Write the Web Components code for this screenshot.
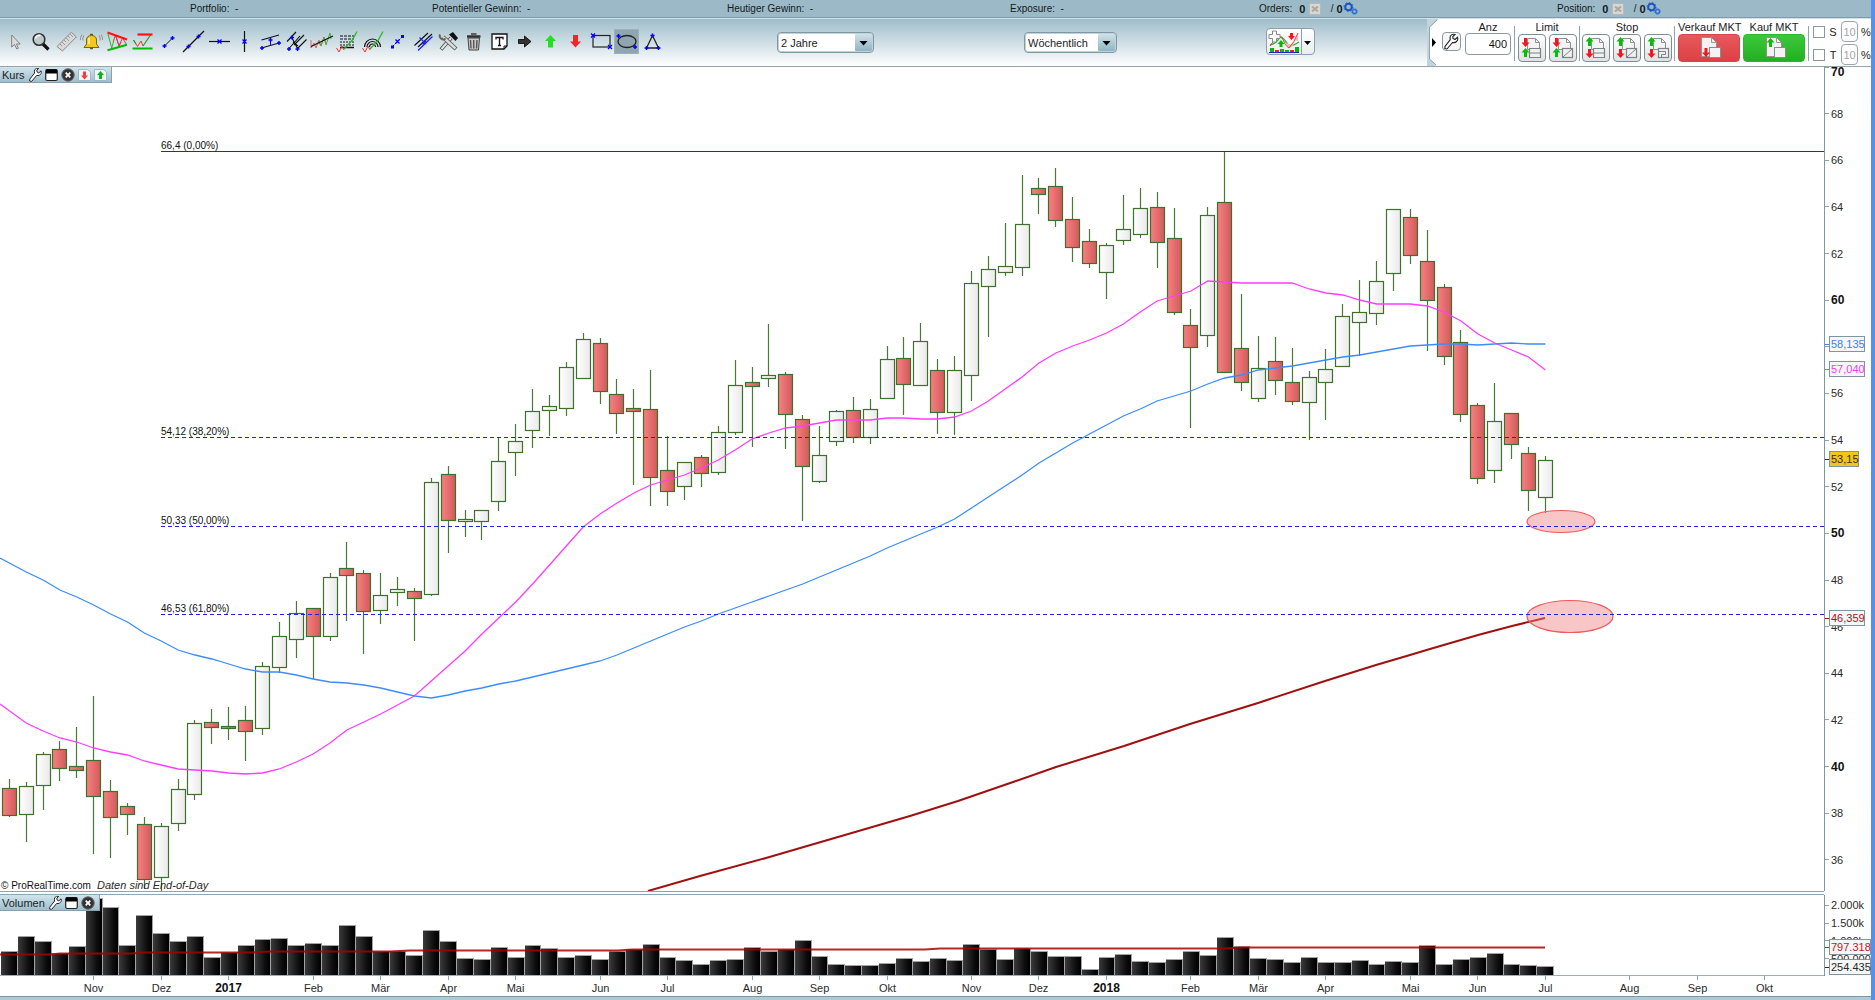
<!DOCTYPE html>
<html lang="de">
<head>
<meta charset="utf-8">
<title>ProRealTime</title>
<style>
html,body{margin:0;height:100%}
body{font:11px "Liberation Sans",Arial,sans-serif;color:#1c1c1c;background:#fff}
</style>
</head>
<body>
<trading-app></trading-app>
<script>
const plus = (x, y) => `<path d="M${x - 2} ${y}h4M${x} ${y - 2}v4" stroke="#00f" stroke-width="1.5"/>`;
const cross = (x, y) => `<path d="M${x - 2} ${y - 2}l4 4m0 -4l-4 4" stroke="#00f" stroke-width="1.3"/>`;
const zig = '<path d="M2.5 19l2.500 4 3-6" stroke="#e33"/><path d="M8 17l2 4" stroke="#e33"/><path d="M10 20L18 11.500L23 2.500" stroke="#2db52d" stroke-width="1.300"/>';
const ICONS = {
  cursor: '<path d="M8.700 6v12l2.800-2.500 2.300 4.500 1.600-.8-2-4.200h3.800z" fill="#dcdcdc" stroke="#777" stroke-width=".9"/>',
  zoom: '<path d="M14.500 14.500l6 6" stroke="#111" stroke-width="3.200"/><circle cx="11" cy="10.500" r="5.800" fill="#bfc9ce" stroke="#333" stroke-width="1.600"/><path d="M7.500 9.500a4 4 0 0 1 5-3" stroke="#fff" stroke-width="1.600"/>',
  ruler: '<path d="M3 17.500L17.300 3.200l5 4.700L8.500 22z" fill="#d9d9d9" stroke="#8a8a8a"/><path d="M6 15l2 2m0-4l3 3m-1-5l2 2m0-4l3 3m-1-5l2 2m0-4l3 3" stroke="#8a8a8a" stroke-width=".8"/>',
  bell: '<path d="M5 18.500h15l-2.500-3.500v-4c0-3-2-4.500-5-4.500s-5 1.500-5 4.500v4z" fill="#f2c81c" stroke="#6e5a10" stroke-width=".9"/><path d="M10 9v6" stroke="#fff3a0" stroke-width="1.500"/><path d="M11 5.500h3M11 19.500h3" stroke="#6e5a10" stroke-width="1.600"/><path d="M5 6.500q-2 2.500-1 5M3 5.500q-2 3-1.500 5.500M20 6.500q2 2.500 1 5M22 5.500q2 3 1.500 5.500" stroke="#8b8b8b" stroke-width=".9"/>',
  wedge: '<path d="M3 5l3.700 14 2-7" stroke="#2db52d"/><path d="M8.500 12l2-6L14 17l2-4" stroke="#e33"/><path d="M10.500 6L14 17l3.500-8 4 6.500" stroke="#c44"/><path d="M2.500 3.500L22 10.500" stroke="#f11" stroke-width="2.200"/><path d="M2.500 21.200L22 15.800" stroke="#0b0" stroke-width="2.200"/>',
  range: '<path d="M3.500 11l4 6.500L11 12l2 5" stroke="#e33"/><path d="M3.500 11l2.500 4M13 17l7.500-11" stroke="#2a9a2a" stroke-width="1.200"/><path d="M7.500 5.500h15" stroke="#f11" stroke-width="2.200"/><path d="M2.500 19.500h20" stroke="#0b0" stroke-width="2"/>',
  segment: '<path d="M8.500 17l8-8" stroke="#111"/>' + plus(8.5, 17) + plus(16.5, 9),
  line: '<path d="M2 23L23 2" stroke="#111" stroke-width="1.200"/>' + plus(7.5, 17.5) + plus(17.5, 7.5),
  hline: '<path d="M2 12.500h21" stroke="#111" stroke-width="1.200"/>' + cross(12.5, 12.5),
  vline: '<path d="M12.500 2v21" stroke="#111" stroke-width="1.200"/>' + cross(12.5, 12.5),
  channel: '<path d="M3.500 11L21 6M3.500 19L21 14" stroke="#111" stroke-width="1.200"/><path d="M12.500 10v6" stroke="#00f"/>' + plus(12.5, 11) + plus(4, 19) + plus(21, 14),
  pitchfork: '<path d="M6 19.500L17 7M9 9l5.500 10.500M14.500 19.500l9-9M10 13l5 4M4 12.500L13 3M11 16L21 6" stroke="#111" stroke-width="1.100"/>' + plus(9, 8.5) + plus(6, 20) + plus(14.5, 20),
  regression: '<path d="M2 11v8l3-5 2 5 3-8 2 6 3-9 2 7" stroke="#d66"/><path d="M9 12l3 5 3-9 2 8 4-12 1 6" stroke="#4aa84a"/><path d="M2 17.500L24 7" stroke="#111" stroke-width="1.200"/>',
  fibo: '<path d="M6 7h14M6 10h14" stroke="#111" stroke-dasharray="3 1"/><path d="M6 13h14M6 16h14" stroke="#111" stroke-dasharray="2 1"/><path d="M6 18.500h14" stroke="#111" stroke-width="1.500"/>' + zig,
  arcs: '<path d="M4.500 18a8 8 0 0 1 16 0M7 18a5.500 5.500 0 0 1 11 0M9.500 18a3 3 0 0 1 6 0" stroke="#111" stroke-width="1.200"/>' + zig,
  link: '<path d="M7.500 17.500l10-10" stroke="#111" stroke-dasharray="2 1"/><path d="M6 16.500h3v3h-3zM16 6h3v3h-3z" fill="#00f"/>' + cross(12.5, 12.5),
  parallel: '<path d="M3.500 16.500L17 4M7 18L21 5" stroke="#111" stroke-width="1.200"/><path d="M7 21.500L21.500 7.500M8.500 8.500l6 6m0-4v4h-4" stroke="#22f" stroke-width="1.300"/>',
  tools: '<path d="M5 20.500L15 9" stroke="#555" stroke-width="3.800"/><path d="M5.500 20L15 9" stroke="#e3e3e3" stroke-width="2"/><path d="M7 8l13 12" stroke="#555" stroke-width="4.200"/><path d="M7 8l12.500 11.500" stroke="#ddd" stroke-width="2.400"/><path d="M4 5.500a3.500 3.500 0 0 0 5.500 4" stroke="#666" stroke-width="2"/><path d="M13 5.500l4-2.500 5 6-2.500 3z" fill="#111"/>',
  trash: '<path d="M7 9h11.500l-1 12h-9.500z" fill="#c9c9c9" stroke="#444"/><path d="M9.500 11l.5 8.500M12.700 11v8.500M16 11l-.5 8.500" stroke="#555" stroke-width="1.400"/><path d="M6 7.500h13.500" stroke="#333" stroke-width="2.500"/><path d="M10 5h5.500" stroke="#444" stroke-width="1.600"/>',
  text: '<path d="M5 5h15v12l-3 3H5z" fill="#fff" stroke="#111" stroke-width="1.300"/><path d="M20 17h-3v3" stroke="#111"/><path d="M9 10.500v-2h7v2M12.500 8.500v8M11 16.500h3" stroke="#111" stroke-width="1.300"/>',
  right: '<path d="M6.500 10.500h6v-3.500l6.500 5.500-6.500 5.500v-3.500h-6z" fill="#333" stroke="#000" stroke-width=".8"/>',
  up: '<path d="M12.500 6l5.500 6h-3v6.500h-5V12H7z" fill="#26dd26"/>',
  down: '<path d="M12.500 18.500l5.500-6h-3V6h-5v6.500H7z" fill="#f8222a"/>',
  rect: '<rect x="4" y="6.500" width="17" height="11.500" stroke="#222" stroke-width="1.200"/>' + cross(4, 6.5) + cross(21, 18),
  ellipse: '<ellipse cx="13" cy="12.500" rx="9" ry="6" stroke="#222" stroke-width="1.300"/>' + plus(4.5, 7) + plus(21, 18),
  triangle: '<path d="M12.500 6.500l6 12.500h-12z" stroke="#222" stroke-width="1.300"/>' + plus(12.5, 6.5) + plus(6.5, 19) + plus(18.5, 19)
};
const WRENCH = '<path d="M2 13.500L1.800 15.500 4 16l5.500-6.500q3.500.8 5-2.200.5-1.500 0-3L12 6.500 10 5.500 9.800 3.500 12 1.500q-3-.8-4.500 1.500-.8 1.500-.2 3.700z" fill="#fff" stroke="#222" stroke-width="1.100"/>';
const svg = (w, h, body) => `<svg width="${w}" height="${h}" viewBox="0 0 ${w} ${h}" fill="none" aria-hidden="true">${body}</svg>`;
const GEARS = svg(15, 13, '<circle cx="5.500" cy="5" r="3.300" stroke="#1d55c4" stroke-width="2"/><circle cx="5.500" cy="5" r="4.500" stroke="#1d55c4" stroke-dasharray="1.500 2"/><circle cx="11.500" cy="9.500" r="2" stroke="#2f6fd8" stroke-width="1.400"/><circle cx="11.500" cy="9.500" r="2.800" stroke="#2f6fd8" stroke-dasharray="1 1.200"/>');
const CANCEL = svg(12, 12, '<rect x=".5" y=".5" width="11" height="11" fill="#d9d7cf" stroke="#b5b9b8"/><path d="M3 3.500l6 5m0-5l-6 5" stroke="#a9a9a4" stroke-width="2.200"/>');

class Base extends HTMLElement {
  constructor() { super(); this.attachShadow({ mode: 'open' }); }
  connectedCallback() { this.shadowRoot.innerHTML = `<style>${this.css()}</style>${this.html()}`; this.ready && this.ready(); }
}
const define = (name, css, html) => customElements.define(name, class extends Base {
  css() { return css; }
  html() { return typeof html === 'function' ? html(this) : html; }
});

define('tool-button', `
  :host{display:block}
  button{display:block;width:25px;height:25px;padding:0;border:0;background:none}
  :host([active]) button{background:#8fa5b0;box-shadow:inset 0 0 0 1px #9fb0b8}
  svg{display:block}`,
  el => `<button aria-label="${el.getAttribute('icon')}">${svg(25, 25, ICONS[el.getAttribute('icon')])}</button>`);

define('drop-down', `
  :host{display:grid;height:21px;box-sizing:border-box;border:1px solid #7e98a4;border-radius:4px;background:#fff;box-shadow:0 0 0 1px #c3d2d9 inset}
  select,svg{grid-area:1/1}
  select{appearance:none;border:0;background:none;width:100%;font:inherit;color:#222;padding:0 0 0 3px}
  svg{justify-self:end;align-self:center;margin-right:1px;pointer-events:none}`,
  el => `<select aria-label="${el.getAttribute('label')}"><option>${el.getAttribute('value')}</option></select>
  ${svg(17, 17, '<defs><linearGradient id="g" x2="0" y2="1"><stop stop-color="#cfe1e9"/><stop offset="1" stop-color="#8fb4c4"/></linearGradient></defs><rect width="17" height="17" rx="1" fill="url(#g)"/><path d="M4.500 7h8l-4 4.500z" fill="#000"/>')}`);

define('status-bar', `
  :host{display:grid;grid-template-columns:242fr 295fr 283fr 249fr 298fr 314fr;align-items:center;height:18px;box-sizing:border-box;
    padding-left:190px;background:#9bb9c7;border-bottom:1px solid #7f9ba8;font-size:10px;color:#15191b}
  span{display:flex;align-items:center;gap:4px;white-space:pre;height:16px}
  b{font-size:11px}
  .g{gap:0}`,
  `<span>Portfolio:  -</span><span>Potentieller Gewinn:  -</span><span>Heutiger Gewinn:  -</span><span>Exposure:  -</span>
   <span>Orders: <b>0</b>${CANCEL}<span class="g">  / <b>0</b>${GEARS}</span></span><span>Position: <b>0</b>${CANCEL}<span class="g">  / <b>0</b>${GEARS}</span></span>`);

const page = '<path d="M8.500 3.500h8l4 4v7h-12z" fill="#f4f4f4" stroke="#8b9296"/><path d="M16.500 3.500v4h4" stroke="#8b9296"/>';
const arrow = (x, y, dir) => dir === 'u'
  ? `<path d="M${x} ${y - 5}l4 4.500h-2.500v4.500h-3v-4.500h-2.500z" fill="#0bbb0b"/>`
  : `<path d="M${x} ${y + 5}l4-4.500h-2.500v-4.500h-3v4.500h-2.500z" fill="#f01818"/>`;
const boxes = {
  split: '<path d="M10.500 13.500h11v9h-11zM10.500 18h11" fill="#f0f0f0" stroke="#7b8387" stroke-width="1.200"/>',
  slash: '<rect x="12.500" y="13.500" width="10" height="9" fill="#f0f0f0" stroke="#7b8387" stroke-width="1.200"/><path d="M13 22l9-8" stroke="#7b8387"/>',
  trail: '<rect x="13.500" y="13.500" width="10" height="9" fill="#f0f0f0" stroke="#7b8387" stroke-width="1.200"/><path d="M13.500 16.500h7v3h-4v3" stroke="#7b8387"/>'
};
define('order-button', `
  :host{display:block}
  button{display:grid;place-items:center;width:28px;height:28px;padding:0;border:1px solid #7e8c94;border-radius:4px;background:linear-gradient(#fff,#dfe2e4)}
  :host([big]) button{width:62px;border-color:transparent}
  :host([kind=sell]) button{background:linear-gradient(#e6595c,#dd4044);border-color:#d04a4d}
  :host([kind=buy]) button{background:linear-gradient(#3cc83c,#22b022);border-color:#2fb52f}`,
  el => {
    const k = el.getAttribute('kind');
    if (k === 'sell' || k === 'buy')
      return `<button aria-label="${k}">${svg(26, 26, '<path d="M5.500 2.500h10l5 5v14h-15z" fill="#f2f2f2" stroke="#a08a8a"/><path d="M15.500 2.500v5h5" stroke="#999"/><rect x="13.500" y="12.500" width="11" height="10" fill="#f3f3f3" stroke="#8b8b8b"/>' + (k === 'buy' ? arrow(9.5, 8, 'u') : arrow(10, 17, 'd')))}</button>`;
    const up = k === 'stop';
    return `<button aria-label="${k}">${svg(26, 26, page + boxes[el.getAttribute('box')] + arrow(6.5, 7, up ? 'u' : 'd') + arrow(6.5, 18, up ? 'd' : 'u'))}</button>`;
  });

define('percent-row', `
  :host{display:grid;grid-template-columns:12px 10px 17px 10px;column-gap:3px;align-items:center;height:21px}
  input{box-sizing:border-box;margin:0}
  [type=checkbox]{appearance:none;width:12px;height:12px;border:1px solid #8b989f;background:#fff}
  [type=text]{width:17px;height:21px;padding:0;border:1px solid #9aa3a8;border-radius:4px;font:inherit;color:#a5a5a5;text-align:center}
  label{text-align:center}`,
  el => { const n = el.getAttribute('name'); return `<input type="checkbox" id="c"><label for="c">${n}</label><input type="text" value="10" aria-label="${n} Prozent"><span>%</span>`; });

define('order-panel', `
  :host{display:grid;grid-template-columns:12px 20px 46px 1px 58px 1px 88px 1px 127px 1px auto;column-gap:3px;align-items:stretch;background:#fff;height:47px;color:#1c1c1c}
  .edge{display:block}
  .col{display:flex;flex-direction:column;align-items:center;padding-top:2px}
  .col label,.col>span{line-height:13px;height:13px}
  .row{display:flex;gap:3px}
  .sep{background:#8ea4af;margin:7px 0 5px}
  .set{align-self:start;margin-top:13px;display:grid;place-items:center;width:19px;height:19px;padding:0;border:1px solid #8b989f;border-radius:4px;background:#f6f6f6}
  .qty{box-sizing:border-box;width:46px;height:22px;border:1px solid #8b989f;border-radius:4px;font:inherit;text-align:right;padding:0 3px 0 0;margin-top:-1px;color:#111}
  .mkt{display:grid;grid-template-columns:62px 62px;column-gap:3px;padding-top:2px;text-align:center;white-space:nowrap;align-content:start}
  .mkt span{line-height:13px;height:13px}
  .pct{display:flex;flex-direction:column;gap:2px;padding:2px 0 0 1px}`,
  `${svg(12, 47, '<path d="M0 0H12L3 8V40L9 47H0z" fill="#c2d4dc"/><path d="M10 1L2.500 8V40L9 46" stroke="#8ea4af"/><path d="M5 19l4 4.500L5 28z" fill="#000"/>')}
   <button class="set" aria-label="Einstellungen">${svg(17, 17, WRENCH)}</button>
   <div class="col"><label for="q">Anz</label><input class="qty" id="q" value="400"></div><i class="sep"></i>
   <div class="col"><span>Limit</span><div class="row"><order-button kind="limit" box="split"></order-button><order-button kind="limit" box="slash"></order-button></div></div><i class="sep"></i>
   <div class="col"><span>Stop</span><div class="row"><order-button kind="stop" box="split"></order-button><order-button kind="stop" box="slash"></order-button><order-button kind="stop" box="trail"></order-button></div></div><i class="sep"></i>
   <div class="mkt"><span>Verkauf MKT</span><span>Kauf MKT</span><order-button kind="sell" big></order-button><order-button kind="buy" big></order-button></div><i class="sep"></i>
   <div class="pct"><percent-row name="S"></percent-row><percent-row name="T"></percent-row></div>`);

define('tool-bar', `
  :host{display:flex;align-items:flex-start;box-sizing:border-box;height:49px;border-top:1px solid #d3e1e8;border-bottom:1px solid #93a6af;
    background:linear-gradient(#9fbdca,#fff)}
  .tools{display:flex;justify-content:space-between;width:662px;margin:10px 112px 0 3px}
  drop-down{margin-top:13px}
  .a{width:97px;margin-right:150px}
  .b{width:93px;margin-right:149px}
  .ind{display:flex;margin-top:9px;padding:0;width:49px;height:27px;border:1px solid #8ba0ab;border-radius:4px;background:linear-gradient(#fff,#e9eef0)}
  order-panel{margin-left:auto}`,
  `<div class="tools">${Object.keys(ICONS).map(k => `<tool-button icon="${k}"${k === 'ellipse' ? ' active' : ''}></tool-button>`).join('')}</div>
   <drop-down class="a" label="Zeitraum" value="2 Jahre"></drop-down><drop-down class="b" label="Intervall" value="Wöchentlich"></drop-down>
   <button class="ind" aria-label="Indikatoren">${svg(47, 25, '<path d="M3 16q6-1 10-8 4 1 8 8 4 2 11-3" stroke="#2ab52a" stroke-width="1.400"/><path d="M14 8q3 1 7 10 4 2 6-4l4-10v8q-3-2-6 4-5 0-11-8z" fill="#f3b6b6"/><path d="M3 17q6-10 12-9 3 9 7 11 5-5 9-15" stroke="#d44"/><path d="M2 5.500h3.500V2h4v3.500H13v4H9.500V13h-4V9.500H2z" fill="#fff" stroke="#888"/><path d="M14 11l3.500 4h-2v3h-3v-3h-2z" fill="#0b0"/><path d="M24.500 11l3.500-4h-2V4h-3v3h-2z" fill="#f11"/><path d="M3 23v-4h4v4zM13 23v-3h4v3zM18 23v-2h4v2zM28 23v-5h4v5z" fill="#0b0"/><path d="M8 23v-2h4v2zM23 23v-2h4v2z" fill="#e22"/><path d="M2 23.500h30" stroke="#22c"/><path d="M34.500 0v25" stroke="#8ba0ab"/><path d="M37 12h7l-3.500 4z" fill="#000"/>')}</button>
   <order-panel></order-panel>`);

define('panel-tab', `
  :host{display:flex;align-items:center;gap:3px;box-sizing:border-box;height:16px;padding:0 4px 0 2px;background:linear-gradient(#d2e4ec,#9dbfce);border-right:1px solid #8ba0ab;border-bottom:1px solid #8ba0ab}
  button{display:block;padding:0;border:0;background:none;height:14px}
  svg{display:block}`,
  el => {
    const b = (n, w, s) => `<button aria-label="${n}">${svg(w, 14, s)}</button>`;
    const doc = '<path d="M.5 1.500h9l3 2.500v8.500h-12z" fill="#eef4f8" stroke="#9fb9c9"/>';
    return `<span>${el.getAttribute('name')}</span>` +
      b('Einstellungen', 14, '<g transform="translate(0,-1) scale(.9)">' + WRENCH + '</g>') +
      b('Fenster', 13, '<rect x=".7" y="1.500" width="11.600" height="11" rx="1.500" fill="#fff" stroke="#222" stroke-width="1.200"/><path d="M1 3.500h11" stroke="#000" stroke-width="4"/>') +
      b('Schließen', 14, '<circle cx="7" cy="7" r="6.200" fill="#333" stroke="#666"/><path d="M4.700 4.700l4.600 4.600m0-4.600l-4.600 4.600" stroke="#fff" stroke-width="1.800"/>') +
      (el.hasAttribute('orders') ? b('Verkaufen', 13, doc + '<path d="M6.500 11.500l3.500-4H8V3.500H5v4H3z" fill="#f33c3c"/>') + b('Kaufen', 13, doc + '<path d="M6.500 3l3.500 4H8v4H5v-4H3z" fill="#0fb50f"/>') : '');
  });

/* week: high, body top, body bottom, low, 1 = falling */
const WEEKS = [[779,788,815,817,1],[782,786,814,842,0],[752,754,785,810,0],[741,749,768,781,1],[727,766,770,778,1],[696,760,796,854,1],[780,791,817,858,1],[803,806,814,835,1],[817,824,879,889,1],[823,826,877,891,0],[779,789,823,831,0],[720,723,794,800,0],[709,722,727,744,1],[707,726,728,740,1],[706,720,731,761,1],[662,666,728,735,0],[622,636,667,673,0],[601,613,639,658,0],[608,608,636,679,1],[573,577,636,641,0],[542,568,575,621,1],[570,573,611,654,1],[573,595,610,624,0],[577,589,592,606,0],[588,591,598,641,1],[478,482,594,596,0],[466,474,520,553,1],[510,519,521,537,0],[510,510,521,540,0],[437,461,501,511,0],[424,441,452,476,0],[389,411,430,448,0],[395,406,410,436,0],[362,367,408,416,0],[333,339,378,378,0],[338,343,391,404,1],[379,394,413,434,1],[389,408,411,485,1],[370,409,477,506,1],[436,470,491,506,1],[462,462,486,500,0],[455,457,473,487,1],[426,432,472,475,0],[360,385,432,435,0],[367,382,386,447,1],[324,375,378,387,0],[372,374,414,449,1],[415,419,466,521,1],[426,455,481,483,0],[410,411,441,446,0],[397,410,437,443,1],[399,409,437,444,0],[346,359,398,398,0],[337,358,384,415,1],[323,341,385,385,0],[359,370,412,434,1],[356,370,412,435,0],[271,283,375,401,0],[256,269,286,337,0],[223,266,272,276,0],[175,224,267,276,0],[178,188,194,214,1],[168,186,220,227,1],[197,219,247,262,1],[229,241,263,268,1],[243,245,272,299,0],[195,229,240,245,0],[188,208,234,238,0],[192,207,242,268,1],[208,238,312,315,1],[309,325,347,428,1],[207,215,335,347,0],[151,202,372,373,1],[294,348,382,391,1],[336,368,398,402,0],[337,361,380,395,1],[348,382,401,405,1],[371,377,402,440,0],[349,369,382,420,0],[304,316,366,366,0],[280,312,322,356,0],[261,281,313,325,0],[209,209,273,291,0],[209,217,255,264,1],[230,261,300,351,1],[284,287,356,365,1],[330,342,414,422,1],[403,405,478,484,1],[383,421,470,483,0],[413,413,444,459,1],[447,453,490,511,1],[456,460,497,513,0]];
const MA20 = [711,723,731,738,742,748,752,755,761,765,769,770,771,773,774,773,769,762,754,743,730,722,714,705,696,681,666,651,634,618,602,584,565,546,527,514,503,493,485,480,475,468,460,450,439,433,428,426,423,420,420,420,418,418,419,419,417,411,401,389,377,363,353,346,340,333,324,312,301,296,291,281,282,283,283,283,283,289,293,295,300,304,304,304,306,312,321,334,343,350,357,370];
const MA50 = [562,572,580,590,597,605,614,622,633,641,650,655,659,664,669,672,672,675,679,682,683,685,688,692,696,698,695,691,688,684,681,677,673,669,665,661,655,648,641,634,627,621,614,608,602,596,590,584,577,570,563,556,548,541,534,527,519,508,497,486,475,463,453,443,434,425,416,409,401,396,391,384,378,375,370,368,366,363,360,357,355,352,349,346,345,344,344,345,344,343,344,344];
const MA200 = [[648,891],[700,876],[766,858],[838,837],[910,816],[958,801],[1016,781],[1056,767],[1124,746],[1190,724],[1258,703],[1325,681],[1376,665],[1410,655],[1430,649],[1478,635],[1512,626],[1545,618]];
const VOLUME = [952,937,942,954,947,899,908,946,916,934,942,937,958,953,946,940,939,946,944,946,926,937,952,952,956,931,942,959,960,948,958,946,949,958,956,960,952,950,945,958,961,965,961,960,948,952,950,941,957,965,966,966,964,959,962,959,961,945,950,960,949,952,957,957,970,958,955,962,963,960,952,956,938,947,959,960,963,958,963,963,961,965,962,963,946,965,960,958,954,965,966,967];
const VOLMA = [[0,954],[50,954],[60,953],[130,953],[145,952],[250,952],[270,951],[390,951],[410,950],[618,950],[632,949],[925,949],[940,948],[1225,948],[1240,947],[1545,947]];
const MONTHS = [[5,'Nov'],[9,'Dez'],[13,'2017'],[18,'Feb'],[22,'Mär'],[26,'Apr'],[30,'Mai'],[35,'Jun'],[39,'Jul'],[44,'Aug'],[48,'Sep'],[52,'Okt'],[57,'Nov'],[61,'Dez'],[65,'2018'],[70,'Feb'],[74,'Mär'],[78,'Apr'],[83,'Mai'],[87,'Jun'],[91,'Jul'],[96,'Aug'],[100,'Sep'],[104,'Okt']];
const weekX = i => 9.3 + i * 16.88;

/* A canvas that redraws for its current size: X scales the 1824 units of time, Y the given vertical range. */
class Plot extends Base {
  css() { return `:host{display:block;overflow:hidden;min-width:0;min-height:0}svg{display:block}text{font:11px "Liberation Sans",Arial,sans-serif;fill:#2a2a2a}.s{font-size:10px;fill:#111}.i{font-style:italic}.b{font-weight:bold;font-size:12px;fill:#111}${this.extra || ''}`; }
  html() { return '<svg></svg>'; }
  ready() {
    const go = () => {
      const w = this.clientWidth, h = this.clientHeight;
      if (!w || !h) return;
      const s = this.shadowRoot.querySelector('svg');
      s.setAttribute('width', w); s.setAttribute('height', h);
      const [y0, range] = this.span;
      s.innerHTML = this.draw(v => v * w / 1824, v => (v - y0) * h / range, w, h);
    };
    new ResizeObserver(go).observe(this);
    go();
  }
}
const half = v => Math.floor(v) + .5;
const poly = (pts, X, Y) => pts.map(([x, y]) => X(x).toFixed(1) + ',' + Y(y).toFixed(1)).join(' ');

customElements.define('price-plot', class extends Plot {
  span = [67, 824];
  draw(X, Y, w, h) {
    const series = (start, a) => poly([[0, start], ...a.map((y, i) => [weekX(i), y]).slice(1)], X, Y);
    let o = `<defs><linearGradient id="r"><stop stop-color="#f98080"/><stop offset="1" stop-color="#d05a5c"/></linearGradient><linearGradient id="w"><stop stop-color="#fff"/><stop offset="1" stop-color="#e9e9e9"/></linearGradient></defs>`;
    const bw = Math.round(X(14));
    WEEKS.forEach(([H, T, B, L, down], i) => {
      const c = half(X(weekX(i))), t = half(Y(T)), b = half(Y(B));
      o += `<path d="M${c} ${Y(H)}V${t}M${c} ${b}V${Y(L)}" stroke="#4a7838" stroke-width="1.200"/><rect x="${c - bw / 2}" y="${t}" width="${bw}" height="${Math.max(b - t, 2)}" fill="url(#${down ? 'r' : 'w'})" stroke="#3f6f2c" stroke-width="1.200"/>`;
    });
    o += `<polyline points="${series(704, MA20)}" fill="none" stroke="#ff3cff" stroke-width="1.300"/>
      <polyline points="${series(558, MA50)}" fill="none" stroke="#3c8cff" stroke-width="1.300"/>
      <polyline points="${poly(MA200, X, Y)}" fill="none" stroke="#a01010" stroke-width="2"/>`;
    for (const [x, y, rx, ry] of [[1561, 521.5, 34, 11], [1570, 616.5, 43, 16]])
      o += `<ellipse cx="${X(x)}" cy="${Y(y)}" rx="${rx}" ry="${ry}" fill="#f08080" fill-opacity=".45" stroke="#ee5a5e" stroke-width="1.200"/>`;
    for (const [y, s] of [[151, '66,4 (0,00%)'], [437, '54,12 (38,20%)'], [526, '50,33 (50,00%)'], [614, '46,53 (61,80%)']])
      o += `<line x1="${X(161)}" x2="${w}" y1="${half(Y(y))}" y2="${half(Y(y))}" stroke="#2020ee" stroke-width="1.200"${y > 151 ? ' stroke-dasharray="4 3"' : ''}/><text class="s" x="${X(161)}" y="${Y(y) - 2}">${s}</text>`;
    return o + `<text class="s" x="1" y="${h - 2}">© ProRealTime.com</text><text class="i" x="97" y="${h - 2}">Daten sind End-of-Day</text>`;
  }
});

customElements.define('volume-plot', class extends Plot {
  span = [895, 80];
  draw(X, Y, w, h) {
    let o = '<defs><linearGradient id="k"><stop stop-color="#3a3a3a"/><stop offset=".7" stop-color="#0c0c0c"/><stop offset="1" stop-color="#000"/></linearGradient></defs>';
    VOLUME.forEach((v, i) => {
      const l = Math.round(X(weekX(i) - 8)), r = Math.round(X(weekX(i + 1) - 8)), t = Math.round(Y(v));
      o += `<rect x="${l}" y="${t - 1}" width="${r - l}" height="${h - t + 1}" fill="#a3a3a3"/><rect x="${l}" y="${t}" width="${r - l - 1}" height="${h - t}" fill="url(#k)"/>`;
    });
    return o + `<polyline points="${poly(VOLMA.map(([x, y]) => [x, y + .5]), X, Y)}" fill="none" stroke="#a80000" stroke-opacity=".85" stroke-width="2"/>`;
  }
});

customElements.define('time-axis', class extends Plot {
  span = [0, 20];
  draw(X) {
    return MONTHS.map(([i, s]) => {
      const x = half(X(weekX(i)));
      return `<path d="M${x} 0v4" stroke="#8ea4af"/><text class="${+s ? 'b' : ''}" x="${x}" y="16" text-anchor="middle">${s}</text>`;
    }).join('');
  }
});

const tick = (y, c = '#8ea4af') => `<path d="M0 ${half(y)}h4" stroke="${c}"/>`;
const flag = (y, w, s, c, fill = '#f4f6f7') => tick(y, c) + `<rect x="4.500" y="${half(y) - 8}" width="${w}" height="15" fill="${fill}" stroke="#8095a0"/><text x="6" y="${half(y) + 3}" style="fill:${c}">${s}</text>`;
customElements.define('price-scale', class extends Plot {
  span = [67, 824];
  extra = ':host{border-left:1px solid #7e98a4;overflow:visible}svg{overflow:visible}';
  draw(X, Y) {
    let o = '';
    for (let p = 70; p >= 36; p -= 2) {
      const y = Y(67 + (70 - p) * 23.32), big = p % 10 === 0;
      o += tick(y) + (p === 58 ? '' : `<text class="${big ? 'b' : ''}" x="6" y="${p === 70 ? 9 : Math.round(y) + 4}">${p}</text>`);
    }
    return o + flag(Y(344), 35, '58,135', '#3c84f0') + flag(Y(369), 35, '57,040', '#f43cf4') + flag(Y(459), 29, '53,15', '#3a3000', '#f2c51c') + flag(Y(618), 35, '46,359', '#a81414');
  }
});
customElements.define('volume-scale', class extends Plot {
  span = [895, 80];
  extra = ':host{border-left:1px solid #7e98a4}';
  draw(X, Y) {
    return [[905, '2.000k'], [923, '1.500k'], [940, '1.000k'], [958, '500.000']].map(([y, s]) => tick(Y(y)) + `<text x="6" y="${Y(y) + 4}">${s}</text>`).join('') +
      flag(Y(947), 41, '797.318', '#c01822') + flag(Y(967), 41, '254.435', '#2a2a2a');
  }
});

define('trading-app', `
  :host{display:flex;flex-direction:column;min-height:100vh;border-right:4px solid #5590ee}
  .body{flex:1;display:grid;grid-template:minmax(200px,1fr) 4px 81px 20px/minmax(0,1fr) 47px}
  .pane{display:grid;position:relative;min-width:0;min-height:0}
  panel-tab{position:absolute;left:0;top:0}
  .split{border-top:1px solid #8ea4af;border-bottom:1px solid #8ea4af;height:2px}
  .vol{border-bottom:1px solid #9db0ba}
  .foot{height:3px;border-top:1px solid #7e98a4;background:#abcbd9}`,
  `<status-bar></status-bar><tool-bar></tool-bar>
   <div class="body">
     <div class="pane"><price-plot></price-plot><panel-tab name="Kurs" orders></panel-tab></div><price-scale></price-scale>
     <div class="split"></div><div></div>
     <div class="pane vol"><volume-plot></volume-plot><panel-tab name="Volumen"></panel-tab></div><volume-scale></volume-scale>
     <time-axis></time-axis>
   </div>
   <div class="foot"></div>`);
</script>
</body>
</html>
